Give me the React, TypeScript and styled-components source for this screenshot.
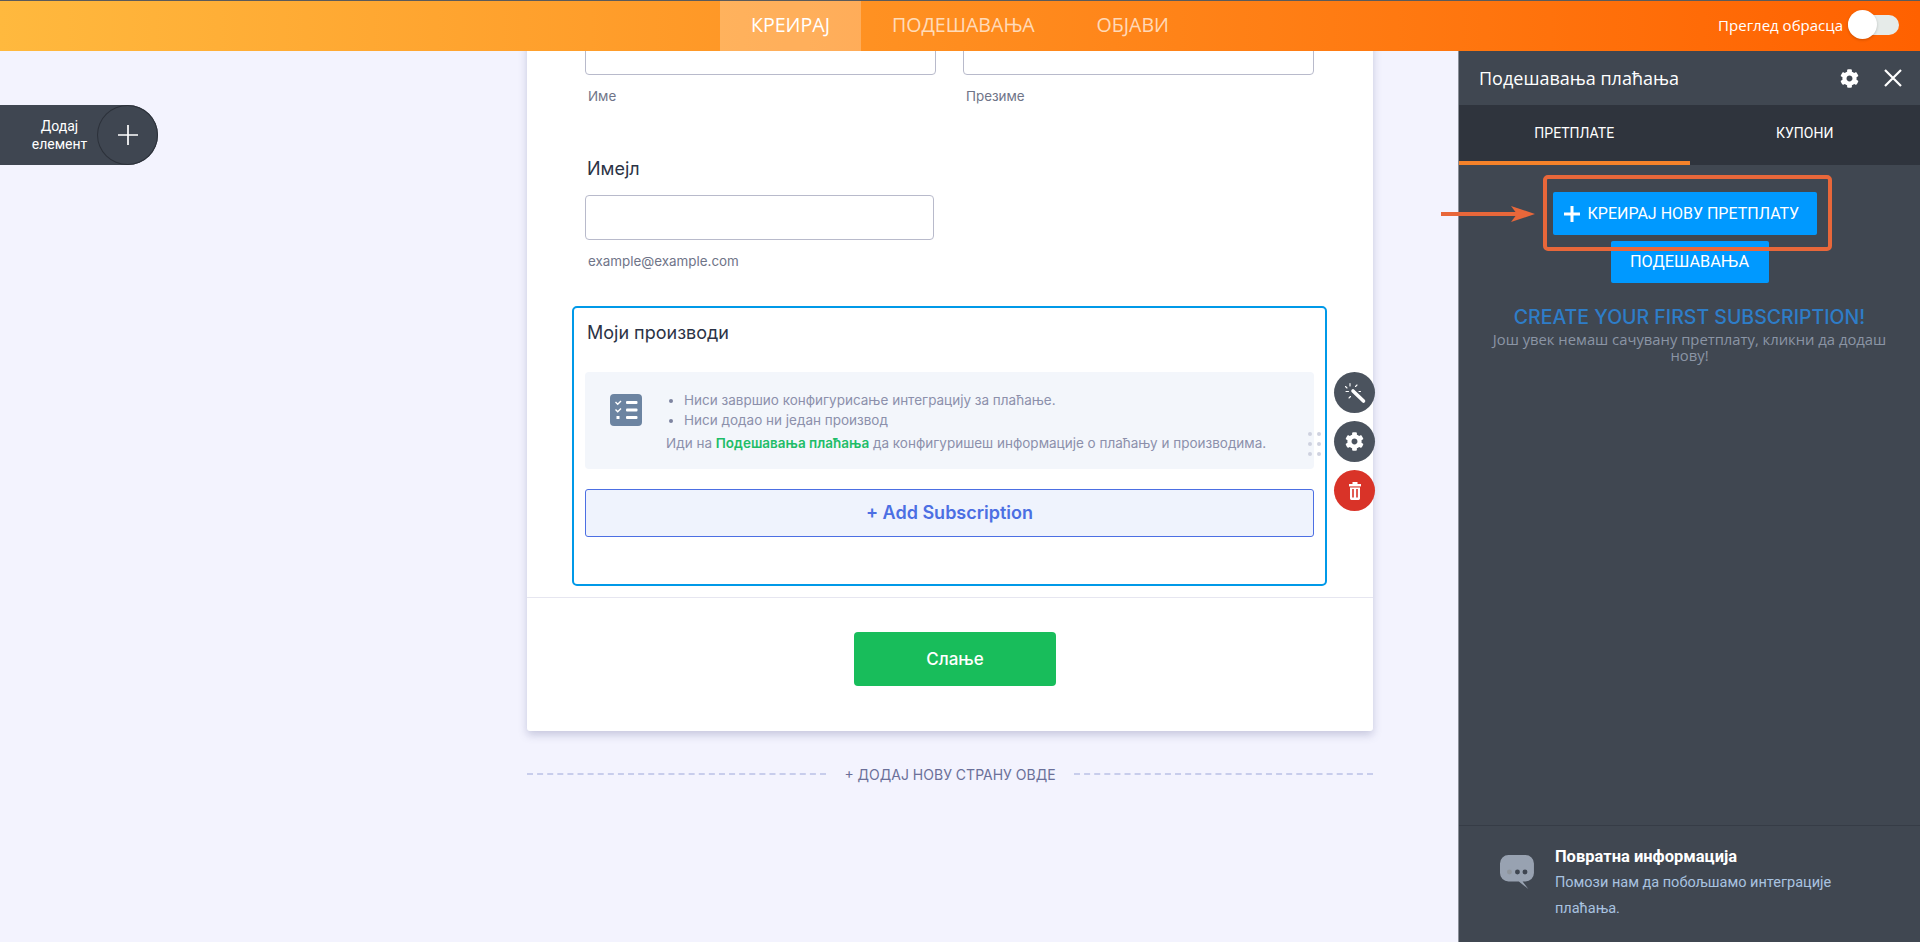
import { createGlobalStyle, styled } from "styled-components"
import { FaCog } from "react-icons/fa"

const GlobalStyle = createGlobalStyle`
  html, body {
    margin: 0;
    height: 100%;
    overflow: hidden;
    background: #f3f3fe;
    font-family: "Inter", "Liberation Sans", sans-serif;
  }
  * { box-sizing: border-box; }
`

const App = () => {
  return (
    <Page>
      <GlobalStyle />
      <Header>
        <span />
        <Nav>
          <NavTab $active>КРЕИРАЈ</NavTab>
          <NavTab>ПОДЕШАВАЊА</NavTab>
          <NavTab>ОБЈАВИ</NavTab>
        </Nav>
        <PreviewToggle>
          Преглед обрасца
          <ToggleTrack>
            <ToggleKnob />
          </ToggleTrack>
        </PreviewToggle>
      </Header>

      <Body>
        <Canvas>
          <AddElement>
            <AddElementLabel>
              Додај
              <br />
              елемент
            </AddElementLabel>
            <AddElementCircle>
              <svg width="24" height="24" viewBox="0 0 24 24" fill="none" stroke="#fff" strokeWidth="1.7">
                <path d="M12 2v20M2 12h20" />
              </svg>
            </AddElementCircle>
          </AddElement>

          <FormCard>
            <FormFields>
              <NameGrid>
                <div>
                  <TextInput $height={45} />
                  <SubLabel>Име</SubLabel>
                </div>
                <div>
                  <TextInput $height={45} />
                  <SubLabel>Презиме</SubLabel>
                </div>
              </NameGrid>

              <FieldLabel>Имејл</FieldLabel>
              <EmailInput $height={45} />
              <SubLabel>example@example.com</SubLabel>

              <ProductBox>
                <ProductTitle>Моји производи</ProductTitle>
                <Notice>
                  <NoticeIcon>
                    <svg width="32" height="32" viewBox="0 0 32 32">
                      <rect width="32" height="32" rx="4" fill="#6c84a1" />
                      <path d="M5.5 8l2.2 2.2L11 7M5.5 15.5l2.2 2.2L11 14.5" fill="none" stroke="#fff" strokeWidth="1.4" />
                      <rect x="6.5" y="22" width="3" height="3" fill="#fff" />
                      <rect x="16" y="7" width="11.5" height="3" rx="1" fill="#fff" />
                      <rect x="16" y="14.5" width="11.5" height="3" rx="1" fill="#fff" />
                      <rect x="16" y="22" width="11.5" height="3" rx="1" fill="#fff" />
                    </svg>
                  </NoticeIcon>
                  <NoticeText>
                    <NoticeList>
                      <li>Ниси завршио конфигурисање интеграцију за плаћање.</li>
                      <li>Ниси додао ни један производ</li>
                    </NoticeList>
                    <NoticeHint>
                      Иди на <NoticeLink>Подешавања плаћања</NoticeLink> да конфигуришеш информације о плаћању и
                      производима.
                    </NoticeHint>
                  </NoticeText>
                </Notice>
                <AddSubscription>+ Add Subscription</AddSubscription>

                <DragHandle>
                  {Array.from({ length: 6 }).map((_, i) => (
                    <DragDot key={i} />
                  ))}
                </DragHandle>

                <ActionStack>
                  <ActionButton>
                    <svg width="24" height="24" viewBox="0 0 24 24" fill="none" stroke="#fff" strokeLinecap="round">
                      <path d="M10 10l10.5 10" strokeWidth="3.6" />
                      <path d="M7 2.5v2.5M3 10.5h2.5M14 4l-1.5 1.5M6 17l1.5-1.5M2.5 5.5l1.5 1.5M16 10.5h1.5" strokeWidth="1.1" />
                    </svg>
                  </ActionButton>
                  <ActionButton>
                    <FaCog size={19} />
                  </ActionButton>
                  <ActionButton $danger>
                    <svg width="12" height="18" viewBox="0 0 12 18" fill="#fff">
                      <rect x="0" y="2" width="12" height="2.4" />
                      <rect x="3.5" y="0" width="5" height="2.4" />
                      <path d="M1 5.4h10V16.6A1.4 1.4 0 0 1 9.6 18H2.4A1.4 1.4 0 0 1 1 16.6z" />
                      <rect x="3.2" y="7" width="1.6" height="8.5" fill="#d93328" />
                      <rect x="7.2" y="7" width="1.6" height="8.5" fill="#d93328" />
                    </svg>
                  </ActionButton>
                </ActionStack>
              </ProductBox>
            </FormFields>

            <SubmitArea>
              <SubmitButton>Слање</SubmitButton>
            </SubmitArea>
          </FormCard>

          <AddPageRow>
            <DashedLine />
            <AddPageText>+ ДОДАЈ НОВУ СТРАНУ ОВДЕ</AddPageText>
            <DashedLine />
          </AddPageRow>
        </Canvas>

        <SidePanel>
          <PanelHeader>
            <PanelTitle>Подешавања плаћања</PanelTitle>
            <PanelIcons>
              <FaCog size={19} color="#fff" />
              <svg width="20" height="20" viewBox="0 0 20 20" stroke="#fff" strokeWidth="2.2">
                <path d="M2 2l16 16M18 2L2 18" />
              </svg>
            </PanelIcons>
          </PanelHeader>

          <PanelTabs>
            <PanelTab $active>ПРЕТПЛАТЕ</PanelTab>
            <PanelTab>КУПОНИ</PanelTab>
          </PanelTabs>

          <PanelContent>
            <ButtonStack>
              <Callout />
              <CalloutArrow>
                <svg width="94" height="16" viewBox="0 0 94 16" fill="#e8673a">
                  <rect x="0" y="6" width="80" height="4" />
                  <path d="M70 0l24 8-24 8 6-8z" />
                </svg>
              </CalloutArrow>
              <CreateButton>
                <svg width="16" height="16" viewBox="0 0 16 16" stroke="#fff" strokeWidth="3">
                  <path d="M8 0v16M0 8h16" />
                </svg>
                КРЕИРАЈ НОВУ ПРЕТПЛАТУ
              </CreateButton>
              <SettingsButton>ПОДЕШАВАЊА</SettingsButton>
            </ButtonStack>
            <EmptyTitle>CREATE YOUR FIRST SUBSCRIPTION!</EmptyTitle>
            <EmptyText>Још увек немаш сачувану претплату, кликни да додаш нову!</EmptyText>
          </PanelContent>

          <Feedback>
            <svg width="36" height="36" viewBox="0 0 36 36">
              <path
                d="M9 0h18a9 9 0 0 1 9 9v10a9 9 0 0 1-9 9h-3l6 8-10-8H9a9 9 0 0 1-9-9V9a9 9 0 0 1 9-9z"
                fill="#98a2b1"
              />
              <circle cx="10" cy="18" r="2.6" fill="#8f959c" />
              <circle cx="18.5" cy="18" r="2.6" fill="#3f4651" />
              <circle cx="26.5" cy="18" r="2.6" fill="#3f4651" />
            </svg>
            <FeedbackText>
              <FeedbackTitle>Повратна информација</FeedbackTitle>
              <FeedbackBody>Помози нам да побољшамо интеграције плаћања.</FeedbackBody>
            </FeedbackText>
          </Feedback>
        </SidePanel>
      </Body>
    </Page>
  )
}

const Page = styled.div`
  width: 1920px;
  height: 942px;
  display: flex;
  flex-direction: column;
  overflow: hidden;
`

const Header = styled.header`
  height: 51px;
  flex: none;
  display: grid;
  grid-template-columns: 1fr auto 1fr;
  border-top: 1px solid #5b5b5b;
  background: linear-gradient(90deg, #ffb93e 0%, #ff6100 100%);
`

const Nav = styled.nav`
  display: flex;
`

const NavTab = styled.a<{ $active?: boolean }>`
  display: flex;
  align-items: center;
  padding: 0 31px 3px;
  font-family: "Open Sans", sans-serif;
  font-size: 19.6px;
  color: ${(p) => (p.$active ? "#fff" : "rgba(255, 255, 255, 0.7)")};
  background: ${(p) => (p.$active ? "rgba(255, 255, 255, 0.25)" : "transparent")};
`

const PreviewToggle = styled.div`
  display: flex;
  align-items: center;
  justify-content: flex-end;
  padding: 0 21px 2px 0;
  gap: 5px;
  font-family: "Open Sans", sans-serif;
  font-size: 15px;
  color: #fff;
`

const ToggleTrack = styled.div`
  position: relative;
  width: 51px;
  height: 20px;
  border-radius: 10px;
  background: #e6ebe9;
`

const ToggleKnob = styled.div`
  position: absolute;
  left: 0;
  top: -5px;
  width: 29px;
  height: 29px;
  border-radius: 50%;
  background: #fff;
  box-shadow: 0 1px 3px rgba(0, 0, 0, 0.2);
`

const Body = styled.div`
  flex: 1;
  min-height: 0;
  display: flex;
`

const Canvas = styled.main`
  position: relative;
  flex: 1;
  overflow: hidden;
  padding-left: 527px;
`

const AddElement = styled.div`
  position: absolute;
  left: 0;
  top: 54px;
  width: 158px;
  height: 60px;
  display: flex;
  justify-content: flex-end;
  background: #3f4651;
  border-radius: 0 30px 30px 0;
`

const AddElementLabel = styled.div`
  align-self: center;
  width: 97px;
  padding-left: 22px;
  font-family: "Roboto", sans-serif;
  font-size: 14px;
  line-height: 18px;
  color: #fff;
  text-align: center;
`

const AddElementCircle = styled.div`
  width: 61px;
  height: 60px;
  flex: none;
  display: flex;
  align-items: center;
  justify-content: center;
  border: 1px solid #2c313a;
  border-radius: 50%;
`

const FormCard = styled.section`
  width: 846px;
  margin-top: -40px;
  border-radius: 3px;
  background: #fff;
  box-shadow: 0 4px 8px rgba(87, 90, 140, 0.28);
`

const FormFields = styled.div`
  padding: 19px 59px 0 58px;
`

const NameGrid = styled.div`
  display: grid;
  grid-template-columns: 351px 351px;
  gap: 27px;
`

const TextInput = styled.div<{ $height: number }>`
  height: ${(p) => p.$height}px;
  border: 1px solid #b8bacb;
  border-radius: 4px;
  background: #fff;
`

const EmailInput = styled(TextInput)`
  width: 349px;
  margin-top: 16px;
`

const SubLabel = styled.div`
  margin-top: 13px;
  padding-left: 3px;
  font-size: 13.4px;
  line-height: 16px;
  color: #6f7488;
`

const FieldLabel = styled.div`
  margin-top: 55px;
  padding-left: 2px;
  font-size: 18px;
  font-weight: 400;
  line-height: 20px;
  color: #2c3345;
`

const ProductBox = styled.div`
  position: relative;
  width: 755px;
  height: 280px;
  margin: 37px 0 0 -13px;
  padding: 14px 11px 0 11px;
  border: 2px solid #0099e8;
  border-radius: 5px;
`

const ProductTitle = styled.div`
  padding-left: 2px;
  font-size: 18px;
  font-weight: 400;
  line-height: 22px;
  color: #2c3345;
`

const Notice = styled.div`
  display: flex;
  height: 97px;
  margin-top: 28px;
  padding: 22px 0 0 25px;
  border-radius: 4px;
  background: #f3f6fb;
`

const NoticeIcon = styled.div`
  flex: none;
  width: 56px;
  height: 32px;
`

const NoticeText = styled.div`
  margin-top: -4px;
  font-size: 13.5px;
  color: #8c90ab;
`

const NoticeList = styled.ul`
  margin: 0;
  padding: 0 0 0 18px;
  line-height: 20px;

  li::marker { color: #7e84a0; }
`

const NoticeHint = styled.div`
  margin-top: 3px;
  line-height: 20px;
`

const NoticeLink = styled.span`
  color: #1ebd68;
  font-weight: 600;
`

const AddSubscription = styled.div`
  height: 48px;
  margin-top: 20px;
  padding-bottom: 2px;
  display: flex;
  align-items: center;
  justify-content: center;
  border: 1px solid #4c6fe3;
  border-radius: 3px;
  background: #eff3fd;
  color: #4c6fe3;
  font-size: 18px;
  font-weight: 600;
`

const DragHandle = styled.div`
  position: absolute;
  left: 734px;
  top: 124px;
  display: grid;
  grid-template-columns: 4px 4px;
  gap: 6px 5px;
`

const DragDot = styled.span`
  width: 4px;
  height: 4px;
  border-radius: 50%;
  background: #cfd2e0;
`

const ActionStack = styled.div`
  position: absolute;
  left: 760px;
  top: 64px;
  display: flex;
  flex-direction: column;
  gap: 8px;
`

const ActionButton = styled.div<{ $danger?: boolean }>`
  width: 41px;
  height: 41px;
  display: flex;
  align-items: center;
  justify-content: center;
  border-radius: 50%;
  color: #fff;
  background: ${(p) => (p.$danger ? "#d93328" : "#4b535e")};
`

const SubmitArea = styled.div`
  margin-top: 11px;
  padding: 34px 0 45px 10px;
  display: flex;
  justify-content: center;
  border-top: 1px solid #e6e6f0;
`

const SubmitButton = styled.div`
  width: 202px;
  height: 54px;
  display: flex;
  align-items: center;
  justify-content: center;
  border-radius: 4px;
  background: #18bd5b;
  color: #fff;
  font-size: 17px;
  font-weight: 500;
`

const AddPageRow = styled.div`
  width: 846px;
  margin-top: 33px;
  height: 20px;
  display: flex;
  align-items: center;
  gap: 18px;
`

const DashedLine = styled.div`
  flex: 1;
  height: 0;
  border-top: 2px dashed #c8cdec;
`

const AddPageText = styled.div`
  font-size: 14px;
  color: #6b7099;
`

const SidePanel = styled.aside`
  width: 462px;
  flex: none;
  display: flex;
  flex-direction: column;
  border-left: 1px solid #8a8f98;
  background: #404751;
`

const PanelHeader = styled.div`
  height: 54px;
  flex: none;
  display: flex;
  align-items: center;
  justify-content: space-between;
  padding: 0 17px 0 20px;
`

const PanelTitle = styled.div`
  font-family: "Open Sans", sans-serif;
  font-size: 18px;
  color: #fff;
`

const PanelIcons = styled.div`
  display: flex;
  align-items: center;
  gap: 24px;
`

const PanelTabs = styled.div`
  height: 60px;
  flex: none;
  display: grid;
  grid-template-columns: 1fr 1fr;
  background: #2f343d;
`

const PanelTab = styled.div<{ $active?: boolean }>`
  display: flex;
  align-items: center;
  justify-content: center;
  font-family: "Roboto", sans-serif;
  font-size: 14px;
  color: #fff;
  border-bottom: 4px solid ${(p) => (p.$active ? "#f5822a" : "transparent")};
`

const PanelContent = styled.div`
  flex: 1;
  padding-top: 27px;
  display: flex;
  flex-direction: column;
  align-items: center;
  font-family: "Roboto", sans-serif;
`

const ButtonStack = styled.div`
  position: relative;
  display: flex;
  flex-direction: column;
  align-items: center;
  gap: 6px;
`

const Callout = styled.div`
  position: absolute;
  left: -10px;
  top: -17px;
  width: 289px;
  height: 76px;
  border: 4px solid #e8673a;
  border-radius: 5px;
  pointer-events: none;
  z-index: 1;
`

const CalloutArrow = styled.div`
  position: absolute;
  left: -112px;
  top: 14px;
  line-height: 0;
`

const CreateButton = styled.div`
  width: 264px;
  height: 43px;
  margin-right: 10px;
  display: flex;
  align-items: center;
  gap: 8px;
  padding-left: 11px;
  border-radius: 2px;
  background: #0099ff;
  color: #fff;
  font-size: 16px;
`

const SettingsButton = styled.div`
  width: 158px;
  height: 42px;
  padding-bottom: 2px;
  display: flex;
  align-items: center;
  justify-content: center;
  border-radius: 2px;
  background: #0099ff;
  color: #fff;
  font-size: 16.3px;
`

const EmptyTitle = styled.div`
  margin-top: 22px;
  font-family: "Inter", sans-serif;
  font-size: 19.5px;
  font-weight: 500;
  color: #2e7dc8;
`

const EmptyText = styled.div`
  width: 410px;
  margin-top: 2px;
  font-family: "Open Sans", sans-serif;
  font-size: 14.8px;
  line-height: 16px;
  text-align: center;
  color: #8b95a5;
`

const Feedback = styled.div`
  height: 117px;
  flex: none;
  display: flex;
  gap: 21px;
  padding: 28px 40px 0 41px;
  border-top: 1px solid #363c46;
`

const FeedbackText = styled.div`
  margin-top: -6px;
  font-family: "Roboto", sans-serif;
`

const FeedbackTitle = styled.div`
  font-size: 16.5px;
  font-weight: 700;
  line-height: 18px;
  color: #fff;
`

const FeedbackBody = styled.div`
  margin-top: 4px;
  font-size: 14.5px;
  line-height: 26px;
  color: #a9c3e0;
`

export default App
